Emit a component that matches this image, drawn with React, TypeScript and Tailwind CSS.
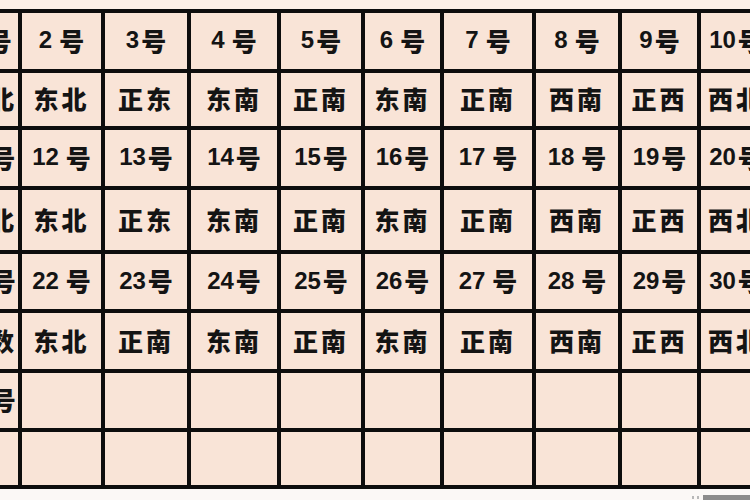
import React from "react";

const cols = ["18px", "79px", "82px", "86px", "80px", "75px", "88px", "82px", "75px", "1fr"];

type Cell = { n?: string; sp?: boolean; d?: string } | null;

const num = (n: string, sp = false): Cell => ({ n, sp });
const dir = (d: string): Cell => ({ d });

const rows: Cell[][] = [
  [num("1", true), num("2", true), num("3"), num("4", true), num("5"), num("6", true), num("7", true), num("8", true), num("9"), num("10")],
  [dir("东北"), dir("东北"), dir("正东"), dir("东南"), dir("正南"), dir("东南"), dir("正南"), dir("西南"), dir("正西"), dir("西北")],
  [num("11"), num("12", true), num("13"), num("14"), num("15"), num("16"), num("17", true), num("18", true), num("19"), num("20")],
  [dir("东北"), dir("东北"), dir("正东"), dir("东南"), dir("正南"), dir("东南"), dir("正南"), dir("西南"), dir("正西"), dir("西北")],
  [num("21"), num("22", true), num("23"), num("24"), num("25"), num("26"), num("27", true), num("28", true), num("29"), num("30")],
  [dir("日数"), dir("东北"), dir("正南"), dir("东南"), dir("正南"), dir("东南"), dir("正南"), dir("西南"), dir("正西"), dir("西北")],
  [num("31"), null, null, null, null, null, null, null, null, null],
  [null, null, null, null, null, null, null, null, null, null],
];

function Content({ c }: { c: Cell }) {
  if (!c) return null;
  if (c.d) {
    return (
      <span className="font-['Noto_Sans_CJK_SC',sans-serif] text-[25px] font-black tracking-[3px] leading-none text-[#141414] -mt-[2px]">
        {c.d}
      </span>
    );
  }
  return (
    <span className="flex items-center leading-none text-[#141414] -mt-[2px]">
      <span className="font-['Liberation_Sans',Arial,sans-serif] text-[24px] font-bold">{c.n}</span>
      {c.sp ? <span className="w-[7px]" /> : <span className="w-[2px]" />}
      <span className="font-['Noto_Sans_CJK_SC',sans-serif] text-[25px] font-black">号</span>
    </span>
  );
}

export default function App() {
  return (
    <div className="w-[750px] h-[500px] overflow-hidden flex flex-col bg-[#fbf8f6]">
      <div className="h-[9px] bg-[#fcefe7]" />
      <div className="grid gap-[4px] py-[4px] bg-[#0d0d0d] grid-cols-[18px_79px_82px_86px_80px_75px_88px_82px_75px_1fr] grid-rows-[56px_53px_56px_60px_55px_56px_55px_53px]">
        {rows.map((r, ri) =>
          r.map((c, ci) => {
            if (ci === 0) {
              return (
                <div key={`${ri}-${ci}`} className="bg-[#f9e4d7] overflow-hidden flex justify-end items-center">
                  <div className="w-[58px] shrink-0 flex justify-center items-center">
                    <Content c={c} />
                  </div>
                </div>
              );
            }
            if (ci === cols.length - 1) {
              return (
                <div key={`${ri}-${ci}`} className="bg-[#f9e4d7] overflow-hidden flex justify-start items-center">
                  <div className="w-[70px] shrink-0 flex justify-center items-center">
                    <Content c={c} />
                  </div>
                </div>
              );
            }
            return (
              <div key={`${ri}-${ci}`} className="bg-[#f9e4d7] flex justify-center items-center">
                <Content c={c} />
              </div>
            );
          })
        )}
      </div>
      <div className="flex-1 flex justify-end items-end">
        <div className="flex items-end gap-[3px] mr-[4px] mb-[1px]">
          <div className="w-[2px] h-[3px] bg-[#b8b8b8]" />
          <div className="w-[2px] h-[3px] bg-[#b8b8b8]" />
        </div>
        <div className="w-[47px] h-[5px] bg-[#8c8c8c]" />
      </div>
    </div>
  );
}
